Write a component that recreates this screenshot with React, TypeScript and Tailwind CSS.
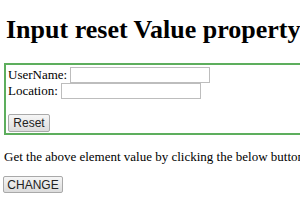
import React from 'react';

const serif = { fontFamily: '"Liberation Serif", "Times New Roman", serif' };

const App: React.FC = () => {
  return (
    <div className="w-[300px] h-[210px] overflow-hidden bg-white text-black" style={serif}>
      <h1 className="ml-[6px] pt-[15px] text-[26px] leading-[30px] font-bold whitespace-nowrap">
        Input reset Value property
      </h1>

      {/* form box */}
      <div className="mt-[18px] ml-[4px] w-[320px] h-[72px] border-2 border-[#5dae5d] pl-[2px] pt-[2px] text-[13px]">
        <div className="flex items-center h-[16px]">
          <span className="leading-[16px]">UserName:</span>
          <input
            type="text"
            className="ml-[3px] w-[140px] h-[16px] border border-[#bdbdbd] bg-white outline-none"
          />
        </div>
        <div className="flex items-center h-[16px]">
          <span className="leading-[16px]">Location:</span>
          <input
            type="text"
            className="ml-[3px] w-[140px] h-[16px] border border-[#bdbdbd] bg-white outline-none"
          />
        </div>
        <button
          type="reset"
          className="mt-[15px] w-[42px] h-[18px] border border-[#a9a9a9] rounded-[2px] bg-gradient-to-b from-[#f6f6f6] to-[#dcdcdc] text-[12px] leading-none text-[#222]"
          style={{ fontFamily: '"Liberation Sans", Arial, sans-serif' }}
        >
          Reset
        </button>
      </div>

      <p className="mt-[14px] ml-[4px] text-[13px] leading-[16px] whitespace-nowrap">
        Get the above element value by clicking the below button
      </p>

      <button
        type="button"
        className="mt-[11px] ml-[3px] w-[60px] h-[17px] border border-[#a9a9a9] rounded-[2px] bg-gradient-to-b from-[#f6f6f6] to-[#dcdcdc] text-[12px] leading-none text-[#222]"
        style={{ fontFamily: '"Liberation Sans", Arial, sans-serif' }}
      >
        CHANGE
      </button>
    </div>
  );
};

export default App;
